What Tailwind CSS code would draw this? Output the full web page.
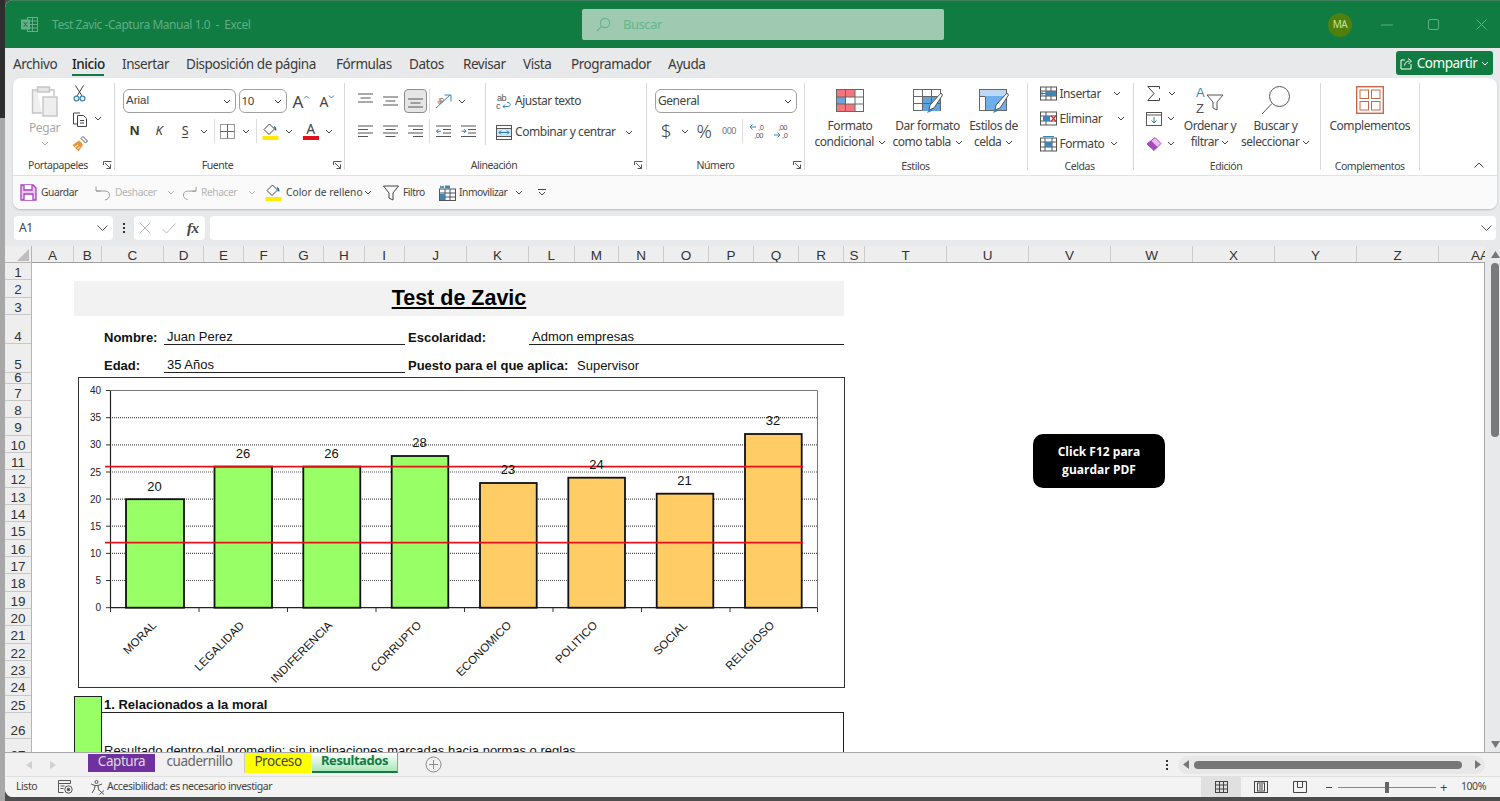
<!DOCTYPE html>
<html lang="es">
<head>
<meta charset="utf-8">
<title>Test Zavic</title>
<script src="https://cdn.jsdelivr.net/npm/@tailwindcss/browser@4"></script>
</head>
<body class="relative flex w-[1500px] h-[801px] overflow-hidden bg-[#4d4d4d] font-['Noto_Sans',sans-serif] tracking-[-0.028em] text-[#333]">
<div class="flex flex-col w-[5px] h-[801px] flex-none"><div class="h-[118px] bg-[#2e2e2e]"></div><div class="flex-1 bg-[#a8a8a8]"></div></div>
<div class="flex flex-col w-[1495px] h-[797px] rounded-tl-lg rounded-bl-lg overflow-hidden bg-[#e7e9eb]">

<!-- title bar -->
<header class="flex items-center h-[48px] flex-none bg-[#107c41] border-t border-[#3f7f5f] text-[#5fae85]">
  <svg class="ml-[16px] w-[17px] h-[17px]" viewBox="0 0 17 17" fill="none" stroke="#66ad89"><rect x="6.5" y="1.5" width="10" height="14"/><path d="M6.5 5h10M6.5 8.5h10M6.5 12h10M11.5 1.5v14"/><rect x="0.5" y="4" width="8" height="9" fill="#66ad89"/><path d="M2.5 6l4 5M6.5 6l-4 5" stroke="#107c41"/></svg>
  <span class="ml-[14px] w-[268px] text-[12px] whitespace-pre">Test Zavic -Captura Manual 1.0  -  Excel</span>
  <div class="flex items-center ml-[262px] w-[362px] h-[31px] rounded-[2px] bg-[#9fcab1]">
    <svg class="ml-[14px] w-[15px] h-[15px]" viewBox="0 0 15 15" fill="none" stroke="#62b88a" stroke-width="1.2"><circle cx="9" cy="6" r="4.6"/><path d="M5.6 9.4L1 14"/></svg>
    <span class="ml-[12px] text-[13px] text-[#62b88a]">Buscar</span>
  </div>
  <div class="flex items-center justify-center ml-[384px] w-[24px] h-[24px] rounded-full bg-[#4f800f] text-[10px] text-[#c5e29c]">MA</div>
  <svg class="ml-[29px] w-[12px] h-[2px]" viewBox="0 0 12 2"><path d="M0 1h12" stroke="#5fae85"/></svg>
  <svg class="ml-[35px] w-[11px] h-[11px]" viewBox="0 0 11 11" fill="none"><rect x="0.5" y="0.5" width="10" height="10" rx="1.5" stroke="#5fae85"/></svg>
  <svg class="ml-[37px] w-[11px] h-[11px]" viewBox="0 0 11 11" fill="none"><path d="M0.5 0.5l10 10M10.5 0.5l-10 10" stroke="#5fae85"/></svg>
</header>

<!-- ribbon tabs -->
<nav class="flex items-center h-[30px] flex-none pl-[8px] pt-[2px] text-[13.5px] text-[#3a3a3a]">
  <span class="w-[59px]">Archivo</span>
  <span class="relative w-[50px] font-medium text-[#222]">Inicio<i class="absolute left-0 top-[20px] w-[32px] h-[2px] bg-[#107c41]"></i></span>
  <span class="w-[64px]">Insertar</span>
  <span class="w-[150px]">Disposición de página</span>
  <span class="w-[73px]">Fórmulas</span>
  <span class="w-[54px]">Datos</span>
  <span class="w-[60px]">Revisar</span>
  <span class="w-[48px]">Vista</span>
  <span class="w-[97px]">Programador</span>
  <span>Ayuda</span>
  <div class="flex items-center justify-center ml-auto mr-[7px] mb-[2px] w-[97px] h-[24px] rounded-[3px] bg-[#107c41] text-white text-[13.5px] gap-[4px]">
    <svg class="w-[13px] h-[13px]" viewBox="0 0 13 13" fill="none" stroke="#fff"><path d="M5 3H1v9h10V7M4.5 8.5C5 5.5 7 4 9.5 4M8 1.500l3.500 2.500L8.500 7"/></svg>
    <span>Compartir</span>
    <svg class="w-[8px] h-[5px]" viewBox="0 0 8 5" fill="none" stroke="#fff"><path d="M1 1l3 3 3-3"/></svg>
  </div>
</nav>

<!-- ribbon card -->
<section class="ml-[8px] mr-[-2px] w-[1484px] h-[131px] flex-none flex flex-col rounded-lg bg-white shadow-[0_1px_2px_#bbb] text-[12px] text-[#444]">
  <div class="flex h-[97px] flex-none">

    <!-- Portapapeles -->
    <div class="flex flex-col w-[101.5px] h-[87px] mt-[5px] border-r border-[#d9d9d9] flex-none [&>*]:flex-none">
      <div class="flex h-[75px]">
        <div class="flex flex-col items-center ml-[4px] w-[55px]">
          <svg class="w-[28px] h-[31px] mt-[3px]" viewBox="0 0 28 31" fill="none" stroke="#c4c4c4" stroke-width="1.4"><path d="M6 4H1.500v23H11" fill="#eee"/><path d="M19 4h4v6" /><rect x="6.500" y="1" width="12" height="5" fill="#e4e4e4"/><rect x="12" y="11" width="14" height="19" fill="#eee"/></svg>
          <span class="mt-[2px] text-[#aaa]">Pegar</span>
          <svg class="w-[8px] h-[5px] mt-[4px]" viewBox="0 0 8 5" fill="none" stroke="#aaa"><path d="M1 1l3 3 3-3"/></svg>
        </div>
        <div class="flex flex-col -mt-[2px]">
          <div class="flex items-center h-[25px] pl-[1px]"><svg class="w-[13px] h-[17px]" viewBox="0 0 13 17" fill="none"><path d="M2.500 0.500L9 11M10.500 0.500L4 11" stroke="#444"/><circle cx="3.500" cy="13.500" r="2.400" stroke="#3f86b6" stroke-width="1.300"/><circle cx="9.500" cy="13.500" r="2.400" stroke="#3f86b6" stroke-width="1.300"/></svg></div>
          <div class="flex items-center h-[25px]"><svg class="w-[16px] h-[17px]" viewBox="0 0 16 17" fill="none" stroke="#444"><path d="M8 3H1.500v11H5"/><path d="M5.500 5.500h6l3 3v8h-9z" fill="#fff"/><path d="M8 10.500h4M8 13h4"/></svg><svg class="ml-[6px] w-[8px] h-[5px]" viewBox="0 0 8 5" fill="none" stroke="#444"><path d="M1 1l3 3 3-3"/></svg></div>
          <div class="flex items-center h-[25px]"><svg class="w-[16px] h-[16px]" viewBox="0 0 16 16" fill="none"><path d="M9 2.500l4.500 4.500 2-2-4.500-4.500z" stroke="#555"/><path d="M9.500 6.500L7 4.500 0.500 9l6 6.500L11 9z" fill="#e9973a"/><path d="M3 11l3-2M5.500 13l2.500-2.500" stroke="#fff"/></svg></div>
        </div>
      </div>
      <div class="relative h-[15px] leading-[15px] text-[10.5px] pl-[15px]">Portapapeles<svg class="absolute left-[90px] top-[3px] w-[9px] h-[9px]" viewBox="0 0 9 9" fill="none" stroke="#555"><path d="M0.500 4V0.500H8.500M2 2l5.500 5.500M7.500 3.500v4h-4"/></svg></div>
    </div>

    <!-- Fuente -->
    <div class="flex flex-col w-[230px] h-[87px] mt-[5px] border-r border-[#d9d9d9] flex-none [&>*]:flex-none">
      <div class="h-[75px] pt-[6px]">
        <div class="flex items-center h-[24px] pl-[8.500px]">
          <div class="flex items-center justify-between w-[113px] h-[24px] px-[2px] pr-[4px] rounded-md border border-[#a0a0a0] font-['Liberation_Sans',sans-serif] tracking-normal text-[11.5px]">Arial<svg class="w-[8px] h-[5px]" viewBox="0 0 8 5" fill="none" stroke="#333"><path d="M1 1l3 3 3-3"/></svg></div>
          <div class="flex items-center justify-between ml-[2.500px] w-[48px] h-[24px] px-[2px] pr-[4px] rounded-md border border-[#a0a0a0] text-[11.5px]">10<svg class="w-[8px] h-[5px]" viewBox="0 0 8 5" fill="none" stroke="#333"><path d="M1 1l3 3 3-3"/></svg></div>
          <span class="flex ml-[6px] w-[27px] text-[17px] text-[#444] leading-none">A<svg class="w-[7px] h-[4px] mt-[2px]" viewBox="0 0 7 4" fill="none" stroke="#3f86b6"><path d="M1 3.500l2.500-2.500 2.500 2.500"/></svg></span>
          <span class="flex text-[14px] text-[#444] leading-none pt-[2px]">A<svg class="w-[7px] h-[4px]" viewBox="0 0 7 4" fill="none" stroke="#3f86b6"><path d="M1 0.500l2.500 2.500 2.500-2.500"/></svg></span>
        </div>
        <div class="flex items-center h-[24px] mt-[6px] pl-[9.500px]">
          <span class="w-[21px] text-center font-['Liberation_Sans',sans-serif] font-bold text-[13.5px] text-[#333]">N</span>
          <span class="w-[28px] text-center italic text-[13px]">K</span>
          <span class="w-[24px] text-center underline underline-offset-2 text-[12.5px]">S</span>
          <span class="flex justify-center w-[14px]"><svg class="w-[8px] h-[5px]" viewBox="0 0 8 5" fill="none" stroke="#444"><path d="M1 1l3 3 3-3"/></svg></span>
          <i class="ml-[2.500px] w-px h-[24px] bg-[#ddd]"></i>
          <span class="flex justify-center w-[26px]"><svg class="w-[15px] h-[15px]" viewBox="0 0 15 15" fill="none" stroke="#9a9a9a"><rect x="0.500" y="0.500" width="14" height="14"/><path d="M7.500 0.500v14M0.500 7.500h14" stroke="#666"/></svg></span>
          <span class="flex justify-center w-[11px]"><svg class="w-[8px] h-[5px]" viewBox="0 0 8 5" fill="none" stroke="#444"><path d="M1 1l3 3 3-3"/></svg></span>
          <i class="ml-[4px] w-px h-[24px] bg-[#ddd]"></i>
          <span class="flex justify-center w-[28px]"><svg class="w-[17px] h-[17px]" viewBox="0 0 17 17" fill="none"><path d="M7.500 1L2 6.500l5 5 5.500-5.500z" stroke="#444" fill="#fff"/><path d="M12 3.500c1.500 1 2 2 1.500 4" stroke="#1b6fa8" stroke-width="1.500"/><rect x="0.500" y="13" width="16" height="4" fill="#ffea00"/></svg></span>
          <span class="flex justify-center w-[9px]"><svg class="w-[8px] h-[5px]" viewBox="0 0 8 5" fill="none" stroke="#444"><path d="M1 1l3 3 3-3"/></svg></span>
          <span class="ml-[3px] flex flex-col items-center w-[28px] leading-none"><span class="text-[14px] text-[#444] h-[14px]">A</span><i class="w-[16px] h-[4px] bg-[#e0101a]"></i></span>
          <span class="flex justify-center w-[9px]"><svg class="w-[8px] h-[5px]" viewBox="0 0 8 5" fill="none" stroke="#444"><path d="M1 1l3 3 3-3"/></svg></span>
        </div>
      </div>
      <div class="relative h-[15px] leading-[15px] text-[10.5px] text-center pr-[23px]">Fuente<svg class="absolute left-[218px] top-[3px] w-[9px] h-[9px]" viewBox="0 0 9 9" fill="none" stroke="#555"><path d="M0.500 4V0.500H8.500M2 2l5.500 5.500M7.500 3.500v4h-4"/></svg></div>
    </div>

    <!-- Alineacion -->
    <div class="flex flex-col w-[302px] h-[87px] mt-[5px] border-r border-[#d9d9d9] flex-none [&>*]:flex-none">
      <div class="flex h-[75px]">
        <div class="w-[141.500px] h-[62px] border-r border-[#d9d9d9] pt-[6px] flex-none">
          <div class="flex items-center h-[24px] pl-[7.500px]">
            <span class="flex justify-center w-[26px]"><svg class="w-[15px] h-[11px] -mt-[6px]" viewBox="0 0 15 11" fill="none" stroke="#555"><path d="M0 1h15M2.500 5h10M0 9h15"/></svg></span>
            <span class="flex justify-center w-[24px]"><svg class="w-[15px] h-[11px]" viewBox="0 0 15 11" fill="none" stroke="#555"><path d="M0 1h15M2.500 5h10M0 9h15"/></svg></span>
            <span class="flex items-center justify-center ml-[1.500px] w-[23.500px] h-[24px] rounded-[4px] border border-[#8d8d8d] bg-[#e6e6e6]"><svg class="w-[15px] h-[11px] mt-[4px]" viewBox="0 0 15 11" fill="none" stroke="#555"><path d="M0 1h15M2.500 5h10M0 9h15"/></svg></span>
            <i class="ml-[1.500px] w-px h-[24px] bg-[#ddd]"></i>
            <span class="flex justify-center w-[28px]"><svg class="w-[17px] h-[16px]" viewBox="0 0 17 16" fill="none"><path d="M1 15L15 2M9.500 2H16v6.500" stroke="#3f86b6"/><text x="1" y="10" transform="rotate(-45 5 7)" font-size="7" fill="#555" stroke="none" font-family="Liberation Sans">ab</text></svg></span>
            <svg class="w-[8px] h-[5px]" viewBox="0 0 8 5" fill="none" stroke="#444"><path d="M1 1l3 3 3-3"/></svg>
          </div>
          <div class="flex items-center h-[24px] mt-[6px] pl-[7.500px]">
            <span class="flex justify-center w-[26px]"><svg class="w-[15px] h-[13px]" viewBox="0 0 15 13" fill="none" stroke="#555"><path d="M0 1h15M0 4.500h10M0 8h15M0 11.500h10"/></svg></span>
            <span class="flex justify-center w-[25px]"><svg class="w-[15px] h-[13px]" viewBox="0 0 15 13" fill="none" stroke="#555"><path d="M0 1h15M2.500 4.500h10M0 8h15M2.500 11.500h10"/></svg></span>
            <span class="flex justify-center w-[24px]"><svg class="w-[15px] h-[13px]" viewBox="0 0 15 13" fill="none" stroke="#555"><path d="M0 1h15M5 4.500h10M0 8h15M5 11.500h10"/></svg></span>
            <i class="ml-[1.500px] w-px h-[24px] bg-[#ddd]"></i>
            <span class="flex justify-center w-[27px]"><svg class="w-[15px] h-[13px]" viewBox="0 0 15 13" fill="none" stroke="#555"><path d="M0 1h15M7 4.500h8M7 8h8M0 11.500h15"/><path d="M5 6.200H0.500M2.500 4.200l-2 2 2 2" stroke="#2a7ab0"/></svg></span>
            <span class="flex justify-center w-[24px]"><svg class="w-[15px] h-[13px]" viewBox="0 0 15 13" fill="none" stroke="#555"><path d="M0 1h15M7 4.500h8M7 8h8M0 11.500h15"/><path d="M0.500 6.200H5M3 4.200l2 2-2 2" stroke="#2a7ab0"/></svg></span>
          </div>
        </div>
        <div class="flex-1 pt-[6px]">
          <div class="flex items-center h-[24px] pl-[10px]"><svg class="w-[16px] h-[17px]" viewBox="0 0 16 17" fill="none"><text x="1" y="8" font-size="9" fill="#555" stroke="none" font-family="Liberation Sans">ab</text><text x="0" y="16" font-size="9" fill="#555" stroke="none" font-family="Liberation Sans">c</text><path d="M7 13.500h5c3 0 3-4 0-4h-1M9 11.500l-2 2 2 2" stroke="#3f86b6"/></svg><span class="ml-[3px]">Ajustar texto</span></div>
          <div class="flex items-center h-[24px] mt-[7px] pl-[9.500px]"><svg class="w-[16px] h-[15px]" viewBox="0 0 16 15" fill="none" stroke="#555"><rect x="0.500" y="0.500" width="15" height="14"/><path d="M0.500 3.500h15M0.500 11.500h15"/><rect x="1" y="4" width="14" height="7" fill="#cfe6f5" stroke="none"/><path d="M3 7.500h10M5 5.500l-2 2 2 2M11 5.500l2 2-2 2" stroke="#2a7ab0"/></svg><span class="ml-[3.500px] w-[110px] whitespace-nowrap">Combinar y centrar</span><svg class="w-[8px] h-[5px]" viewBox="0 0 8 5" fill="none" stroke="#444"><path d="M1 1l3 3 3-3"/></svg></div>
        </div>
      </div>
      <div class="relative h-[15px] leading-[15px] text-[10.5px] text-center pr-[2px]">Alineación<svg class="absolute left-[289px] top-[3px] w-[9px] h-[9px]" viewBox="0 0 9 9" fill="none" stroke="#555"><path d="M0.500 4V0.500H8.500M2 2l5.500 5.500M7.500 3.500v4h-4"/></svg></div>
    </div>

    <!-- Numero -->
    <div class="flex flex-col w-[158px] h-[87px] mt-[5px] border-r border-[#d9d9d9] flex-none [&>*]:flex-none">
      <div class="h-[75px] pt-[6px]">
        <div class="flex items-center justify-between ml-[8.500px] w-[142px] h-[24px] px-[2px] pr-[4px] rounded-md border border-[#a0a0a0]">General<svg class="w-[8px] h-[5px]" viewBox="0 0 8 5" fill="none" stroke="#333"><path d="M1 1l3 3 3-3"/></svg></div>
        <div class="flex items-center h-[24px] mt-[6px] pl-[11.500px]">
          <span class="w-[16px] text-center text-[19px] font-light leading-none text-[#444]">$</span>
          <span class="flex justify-center w-[22px]"><svg class="w-[8px] h-[5px]" viewBox="0 0 8 5" fill="none" stroke="#444"><path d="M1 1l3 3 3-3"/></svg></span>
          <span class="w-[16px] text-center text-[19px] font-light leading-none text-[#444]">%</span>
          <span class="ml-[9px] w-[16px] text-center text-[9px] text-[#777]">000</span>
          <i class="ml-[5px] w-px h-[24px] bg-[#ddd]"></i>
          <span class="ml-[6px] w-[17px] h-[16px]"><svg class="w-[17px] h-[16px]" viewBox="0 0 17 16" fill="none"><path d="M7 4H1M3.500 1.500L1 4l2.500 2.500" stroke="#3f86b6"/><text x="9" y="7" font-size="7.500" fill="#555" stroke="none" font-family="Liberation Sans">,0</text><text x="5" y="15" font-size="7.500" fill="#555" stroke="none" font-family="Liberation Sans">,00</text></svg></span>
          <span class="ml-[7px] w-[17px] h-[16px]"><svg class="w-[17px] h-[16px]" viewBox="0 0 17 16" fill="none"><text x="5" y="7" font-size="7.500" fill="#555" stroke="none" font-family="Liberation Sans">,00</text><text x="9" y="15" font-size="7.500" fill="#555" stroke="none" font-family="Liberation Sans">,0</text><path d="M1 12h6M4.500 9.500L7 12l-2.500 2.500" stroke="#3f86b6"/></svg></span>
        </div>
      </div>
      <div class="relative h-[15px] leading-[15px] text-[10.5px] text-center pr-[19px]">Número<svg class="absolute left-[146px] top-[3px] w-[9px] h-[9px]" viewBox="0 0 9 9" fill="none" stroke="#555"><path d="M0.500 4V0.500H8.500M2 2l5.500 5.500M7.500 3.500v4h-4"/></svg></div>
    </div>

    <!-- Estilos -->
    <div class="flex flex-col w-[223px] h-[87px] mt-[5px] border-r border-[#d9d9d9] flex-none [&>*]:flex-none">
      <div class="flex h-[75px] leading-[15.500px] text-center">
        <div class="flex flex-col items-center w-[91px] flex-none">
          <svg class="w-[28px] h-[23px] mt-[6px] mb-[6px]" viewBox="0 0 28 23" fill="none" stroke="#666"><rect x="0.500" y="0.500" width="27" height="22" fill="#fff"/><rect x="1" y="1" width="18" height="7" fill="#f4757d" stroke="none"/><rect x="1" y="15" width="18" height="7" fill="#f4757d" stroke="none"/><rect x="1" y="8" width="9" height="7" fill="#6ba5d9" stroke="none"/><path d="M0.500 8h27M0.500 15h27M9.500 0.500v22M19 0.500v22"/></svg>
          <span>Formato</span>
          <span class="whitespace-nowrap">condicional <svg class="inline w-[8px] h-[5px] ml-[1px]" viewBox="0 0 8 5" fill="none" stroke="#444"><path d="M1 1l3 3 3-3"/></svg></span>
        </div>
        <div class="flex flex-col items-center w-[66px] -ml-[1px] flex-none">
          <svg class="w-[30px] h-[26px] mt-[6px] mb-[3px]" viewBox="0 0 30 26" fill="none"><rect x="0.500" y="0.500" width="27" height="21" stroke="#666" fill="#fff"/><rect x="9" y="8" width="18" height="14" fill="#5ea3e0"/><path d="M0.500 7.500h27M0.500 14.500h27M9.500 0.500v21M18.500 0.500v21" stroke="#666"/><path d="M28 4L17 16l-1 5 5-2L29.500 6z" fill="#fff" stroke="#555"/><path d="M16 20l-2 4 5-2z" fill="#3f86b6"/></svg>
          <span class="whitespace-nowrap">Dar formato</span>
          <span class="whitespace-nowrap">como tabla <svg class="inline w-[8px] h-[5px] ml-[1px]" viewBox="0 0 8 5" fill="none" stroke="#444"><path d="M1 1l3 3 3-3"/></svg></span>
        </div>
        <div class="flex flex-col items-center w-[66px] flex-none">
          <svg class="w-[30px] h-[26px] mt-[6px] mb-[3px]" viewBox="0 0 30 26" fill="none"><rect x="0.500" y="0.500" width="27" height="21" stroke="#666" fill="#fff"/><rect x="1" y="1" width="26" height="6" fill="#bcd8f2"/><rect x="7" y="7" width="20" height="14" fill="#6bb0ea"/><path d="M0.500 7.500h6M6.500 7.500v14" stroke="#666"/><path d="M28 4L17 16l-1 5 5-2L29.500 6z" fill="#fff" stroke="#555"/><path d="M16 20l-2 4 5-2z" fill="#3f86b6"/></svg>
          <span class="whitespace-nowrap">Estilos de</span>
          <span class="whitespace-nowrap">celda <svg class="inline w-[8px] h-[5px] ml-[1px]" viewBox="0 0 8 5" fill="none" stroke="#444"><path d="M1 1l3 3 3-3"/></svg></span>
        </div>
      </div>
      <div class="h-[15px] leading-[15px] text-[10.5px] text-center translate-y-[1px]">Estilos</div>
    </div>

    <!-- Celdas -->
    <div class="flex flex-col w-[106px] h-[87px] mt-[5px] border-r border-[#d9d9d9] flex-none [&>*]:flex-none">
      <div class="h-[77px] pl-[12px] -mt-[2px]">
        <div class="flex items-center h-[25px]"><svg class="w-[17px] h-[15px]" viewBox="0 0 17 15" fill="none" stroke="#555"><rect x="0.500" y="1" width="16" height="13"/><path d="M6 1v13M11 1v13M0.500 5h16M0.500 10h16"/><rect x="6" y="5" width="10" height="5" fill="#3f86b6" stroke="none"/><path d="M1 7.500h5M3 5.500l-2 2 2 2" stroke="#2a7ab0"/></svg><span class="ml-[3px] w-[53px]">Insertar</span><svg class="w-[8px] h-[5px]" viewBox="0 0 8 5" fill="none" stroke="#444"><path d="M1 1l3 3 3-3"/></svg></div>
        <div class="flex items-center h-[25px]"><svg class="w-[17px] h-[15px]" viewBox="0 0 17 15" fill="none" stroke="#555"><rect x="0.500" y="1" width="16" height="13"/><path d="M6 1v13M0.500 5h16M0.500 10h16"/><rect x="3" y="5" width="7" height="5" fill="#3f86b6" stroke="none"/><path d="M11 4.500l5 6M16 4.500l-5 6" stroke="#d9343c" stroke-width="1.300"/></svg><span class="ml-[3px] w-[57px]">Eliminar</span><svg class="w-[8px] h-[5px]" viewBox="0 0 8 5" fill="none" stroke="#444"><path d="M1 1l3 3 3-3"/></svg></div>
        <div class="flex items-center h-[25px]"><svg class="w-[17px] h-[16px]" viewBox="0 0 17 16" fill="none" stroke="#555"><rect x="0.500" y="2" width="16" height="13"/><path d="M5 2v13M12 2v13M0.500 6h16M0.500 11h16"/><rect x="5" y="6" width="7" height="5" fill="#3f86b6" stroke="none"/><path d="M3 0.500h11" stroke="#3f86b6"/></svg><span class="ml-[3px] w-[50px]">Formato</span><svg class="w-[8px] h-[5px]" viewBox="0 0 8 5" fill="none" stroke="#444"><path d="M1 1l3 3 3-3"/></svg></div>
      </div>
      <div class="h-[15px] leading-[15px] text-[10.5px] text-center translate-y-[1px] pr-[1px]">Celdas</div>
    </div>

    <!-- Edicion -->
    <div class="flex flex-col w-[187px] h-[87px] mt-[5px] border-r border-[#d9d9d9] flex-none [&>*]:flex-none">
      <div class="flex h-[75px]">
        <div class="flex flex-col w-[44px] pl-[12px] -mt-[2px] flex-none">
          <div class="flex items-center h-[25px]"><span class="flex justify-center w-[16px]"><svg class="w-[13px] h-[15px]" viewBox="0 0 13 15" fill="none" stroke="#444"><path d="M12.500 3V0.500H0.800L7 7.500 0.800 14.500h11.700V12"/></svg></span><svg class="ml-[6px] w-[8px] h-[5px]" viewBox="0 0 8 5" fill="none" stroke="#444"><path d="M1 1l3 3 3-3"/></svg></div>
          <div class="flex items-center h-[25px]"><svg class="w-[16px] h-[14px]" viewBox="0 0 16 14" fill="none" stroke="#555"><rect x="0.500" y="0.500" width="15" height="13"/><path d="M0.500 3h15"/><path d="M8 5v6M5.500 8.500L8 11l2.500-2.500" stroke="#2a7ab0"/></svg><svg class="ml-[5px] w-[8px] h-[5px]" viewBox="0 0 8 5" fill="none" stroke="#444"><path d="M1 1l3 3 3-3"/></svg></div>
          <div class="flex items-center h-[25px]"><svg class="w-[16px] h-[14px]" viewBox="0 0 16 14" fill="none"><path d="M9 0.500l6 6L8 13.500 1 7z" fill="#e6bdec" stroke="#a64bbd"/><path d="M5 3.500l6.500 6.500L8 13.500 1 7z" fill="#a64bbd"/></svg><svg class="ml-[5px] w-[8px] h-[5px]" viewBox="0 0 8 5" fill="none" stroke="#444"><path d="M1 1l3 3 3-3"/></svg></div>
        </div>
        <div class="flex flex-col items-center w-[65px] leading-[15.500px] text-center flex-none">
          <svg class="w-[30px] h-[29px] mt-[3px] mb-[3px]" viewBox="0 0 30 29" fill="none"><text x="1" y="11" font-size="13" fill="#3f86b6" stroke="none" font-family="Liberation Sans">A</text><text x="1" y="27" font-size="13" fill="#555" stroke="none" font-family="Liberation Sans">Z</text><path d="M12 9h16l-6 7v8l-4-2v-6z" stroke="#555" fill="#fff"/></svg>
          <span class="whitespace-nowrap">Ordenar y</span>
          <span class="whitespace-nowrap">filtrar <svg class="inline w-[8px] h-[5px]" viewBox="0 0 8 5" fill="none" stroke="#444"><path d="M1 1l3 3 3-3"/></svg></span>
        </div>
        <div class="flex flex-col items-center w-[66px] leading-[15.500px] text-center flex-none">
          <svg class="w-[30px] h-[29px] mt-[3px] mb-[3px]" viewBox="0 0 30 29" fill="none" stroke="#555"><circle cx="18.500" cy="10.500" r="10"/><path d="M11 17.500L1 28"/></svg>
          <span class="whitespace-nowrap">Buscar y</span>
          <span class="whitespace-nowrap">seleccionar <svg class="inline w-[8px] h-[5px]" viewBox="0 0 8 5" fill="none" stroke="#444"><path d="M1 1l3 3 3-3"/></svg></span>
        </div>
      </div>
      <div class="h-[15px] leading-[15px] text-[10.5px] text-center translate-y-[1px] pr-[1px]">Edición</div>
    </div>

    <!-- Complementos -->
    <div class="flex flex-col w-[99.500px] h-[87px] mt-[5px] border-r border-[#d9d9d9] flex-none [&>*]:flex-none">
      <div class="flex flex-col items-center h-[75px] leading-[15.500px]">
        <svg class="w-[28px] h-[28px] mt-[3px] mb-[4px]" viewBox="0 0 28 28" fill="none"><rect x="0.700" y="0.700" width="26.600" height="26.600" stroke="#c5694a" stroke-width="1.400"/><rect x="4" y="4" width="8.500" height="8.500" stroke="#c5694a"/><rect x="15.500" y="4" width="8.500" height="8.500" stroke="#c5694a"/><rect x="4" y="15.500" width="8.500" height="8.500" stroke="#c5694a"/><rect x="15.500" y="15.500" width="8.500" height="8.500" stroke="#c5694a"/></svg>
        <span>Complementos</span>
      </div>
      <div class="h-[15px] leading-[15px] text-[10.5px] text-center translate-y-[1px]">Complementos</div>
    </div>

    <div class="flex justify-end items-end flex-1 pr-[13px] pb-[7px]"><svg class="w-[10px] h-[6px]" viewBox="0 0 10 6" fill="none" stroke="#444"><path d="M0.500 5.500L5 1l4.500 4.500"/></svg></div>
  </div>

  <!-- quick access -->
  <div class="flex items-center h-[34px] flex-none rounded-b-lg bg-[#fafafa] border-t border-[#e2e2e2] text-[10.25px] text-[#444] whitespace-nowrap">
    <svg class="ml-[7px] w-[17px] h-[17px]" viewBox="0 0 17 17" fill="none" stroke="#a83fc0" stroke-width="1.300"><path d="M1 1h12l3 3v12H1z" fill="#e7c9ee"/><path d="M4 1v5h8V1M4 16v-6h9v6" fill="#fff"/></svg>
    <span class="ml-[4px] w-[54px]">Guardar</span>
    <svg class="w-[16px] h-[16px]" viewBox="0 0 16 16" fill="none" stroke="#9a9a9a"><path d="M1 6h9c6 0 6 8 0 9M1 1.500V6h4.500"/></svg>
    <span class="ml-[4px] w-[49px] text-[#b5b5b5]">Deshacer</span>
    <svg class="ml-[3px] w-[8px] h-[5px]" viewBox="0 0 8 5" fill="none" stroke="#bbb"><path d="M1 1l3 3 3-3"/></svg>
    <svg class="ml-[7px] w-[15px] h-[16px]" viewBox="0 0 16 16" fill="none" stroke="#9a9a9a"><path d="M15 6H6c-6 0-6 8 0 9M15 1.500V6h-4.500"/></svg>
    <span class="ml-[4px] w-[43px] text-[#b5b5b5]">Rehacer</span>
    <svg class="ml-[4px] w-[8px] h-[5px]" viewBox="0 0 8 5" fill="none" stroke="#bbb"><path d="M1 1l3 3 3-3"/></svg>
    <svg class="ml-[9px] w-[17px] h-[17px]" viewBox="0 0 17 17" fill="none"><path d="M7.500 1L2 6.500l5 5 5.500-5.500z" stroke="#444" fill="#fff"/><path d="M12 3.500c1.500 1 2 2 1.500 4" stroke="#1b6fa8" stroke-width="1.500"/><rect x="0.500" y="13" width="16" height="4" fill="#ffea00"/></svg>
    <span class="ml-[4px] w-[78px] tracking-normal">Color de relleno</span>
    <svg class="w-[8px] h-[5px]" viewBox="0 0 8 5" fill="none" stroke="#444"><path d="M1 1l3 3 3-3"/></svg>
    <svg class="ml-[11px] w-[16px] h-[16px]" viewBox="0 0 16 16" fill="none" stroke="#444"><path d="M0.500 1h15L10 8v7l-4-2V8z"/></svg>
    <span class="ml-[4px] w-[36px]">Filtro</span>
    <svg class="w-[17px] h-[16px]" viewBox="0 0 17 16" fill="none" stroke="#555"><rect x="0.500" y="4" width="16" height="11.500"/><path d="M6 4v11.500M11 4v11.500M0.500 8h16M0.500 12h16"/><rect x="1" y="9" width="5" height="6" fill="#3f86b6" stroke="none"/><rect x="6" y="0.500" width="5" height="3" fill="#3f86b6" stroke="none"/><path d="M1 1l4 2M5 1L1 3" stroke="#2a7ab0"/></svg>
    <span class="ml-[3px] w-[56px]">Inmovilizar</span>
    <svg class="w-[8px] h-[5px]" viewBox="0 0 8 5" fill="none" stroke="#444"><path d="M1 1l3 3 3-3"/></svg>
    <svg class="ml-[15px] w-[8px] h-[7px]" viewBox="0 0 8 7" fill="none" stroke="#444"><path d="M0 0.500h8M1 3l3 3 3-3"/></svg>
  </div>
</section>

<!-- formula bar -->
<div class="flex items-center h-[24px] mt-[7px] ml-[9px] flex-none text-[#444]">
  <div class="flex items-center justify-between w-[99px] h-[24px] pl-[5px] pr-[5px] rounded bg-white text-[12px]">A1<svg class="w-[11px] h-[6px]" viewBox="0 0 11 6" fill="none" stroke="#555"><path d="M0.500 0.500L5.500 5.500 10.500 0.500"/></svg></div>
  <span class="flex flex-col items-center justify-center gap-[2px] w-[21px]"><i class="w-[2px] h-[2px] bg-[#333]"></i><i class="w-[2px] h-[2px] bg-[#333]"></i><i class="w-[2px] h-[2px] bg-[#333]"></i></span>
  <div class="flex items-center w-[71px] h-[24px] rounded bg-white pl-[5px]">
    <svg class="w-[12px] h-[12px]" viewBox="0 0 12 12" fill="none" stroke="#b8b8b8"><path d="M0.500 0.500l11 11M11.500 0.500l-11 11"/></svg>
    <svg class="ml-[11px] w-[14px] h-[11px]" viewBox="0 0 14 11" fill="none" stroke="#b8b8b8"><path d="M0.500 6l4 4 9-9.500"/></svg>
    <span class="ml-[11px] font-['Liberation_Serif',serif] italic font-bold text-[15px] leading-none text-[#444]">fx</span>
  </div>
  <div class="flex items-center justify-end ml-[5px] w-[1286px] h-[24px] rounded bg-white pr-[4px]"><svg class="w-[11px] h-[6px]" viewBox="0 0 11 6" fill="none" stroke="#555"><path d="M0.500 0.500L5.500 5.500 10.500 0.500"/></svg></div>
</div>

<!-- column headers -->
<div class="flex h-[17px] mt-[6px] flex-none bg-[#eeeeee] font-['Liberation_Sans',sans-serif] tracking-normal text-[13.5px] text-[#333]">
  <div class="flex justify-end items-end w-[27px] flex-none border-r border-b border-[#b5b5b5] pr-[2px] pb-[1px]"><svg class="w-[12px] h-[12px]" viewBox="0 0 12 12"><path d="M12 0v12H0z" fill="#bdbdbd"/></svg></div>
  <div class="grid flex-none w-[1453px] overflow-hidden border-b border-[#9e9e9e] leading-[19px] text-center grid-cols-[42px_27.500px_62.500px_40px_40px_40px_40px_40.500px_40.500px_62px_62px_45.500px_44.500px_45px_45px_45px_45px_45px_21px_82px_82px_82px_82px_82px_82px_82px_46px]">
    <span class="border-r border-[#ccc]">A</span><span class="border-r border-[#ccc]">B</span><span class="border-r border-[#ccc]">C</span><span class="border-r border-[#ccc]">D</span><span class="border-r border-[#ccc]">E</span><span class="border-r border-[#ccc]">F</span><span class="border-r border-[#ccc]">G</span><span class="border-r border-[#ccc]">H</span><span class="border-r border-[#ccc]">I</span><span class="border-r border-[#ccc]">J</span><span class="border-r border-[#ccc]">K</span><span class="border-r border-[#ccc]">L</span><span class="border-r border-[#ccc]">M</span><span class="border-r border-[#ccc]">N</span><span class="border-r border-[#ccc]">O</span><span class="border-r border-[#ccc]">P</span><span class="border-r border-[#ccc]">Q</span><span class="border-r border-[#ccc]">R</span><span class="border-r border-[#ccc]">S</span><span class="border-r border-[#ccc]">T</span><span class="border-r border-[#ccc]">U</span><span class="border-r border-[#ccc]">V</span><span class="border-r border-[#ccc]">W</span><span class="border-r border-[#ccc]">X</span><span class="border-r border-[#ccc]">Y</span><span class="border-r border-[#ccc]">Z</span><span class="whitespace-nowrap overflow-hidden text-left pl-[32px]">AA</span>
  </div>
  <div class="flex justify-center items-center flex-1 bg-[#e7e9eb]"><svg class="w-[9px] h-[7px] ml-[5px]" viewBox="0 0 9 7"><path d="M4.500 0L9 7H0z" fill="#777"/></svg></div>
</div>

<!-- grid area -->
<div class="flex h-[489px] flex-none font-['Liberation_Sans',sans-serif] tracking-normal">
  <div class="flex flex-col w-[27px] flex-none overflow-hidden bg-[#eeeeee] border-r border-[#b5b5b5] text-[13.5px] text-[#333] text-center [&>span]:border-b [&>span]:border-[#c8c8c8] [&>span]:flex-none">
    <span class="h-[17.330px] leading-[19px]">1</span><span class="h-[17.330px] leading-[19px]">2</span><span class="h-[17.340px] leading-[19px]">3</span><span class="h-[29px] leading-[44px]">4</span><span class="h-[29px] leading-[42px]">5</span><span class="h-[11px] leading-[9px] overflow-hidden">6</span><span class="h-[17px] leading-[19px]">7</span>
    <span class="h-[17.350px] leading-[19px]">8</span><span class="h-[17.350px] leading-[19px]">9</span><span class="h-[17.350px] leading-[19px]">10</span><span class="h-[17.350px] leading-[19px]">11</span><span class="h-[17.350px] leading-[19px]">12</span><span class="h-[17.350px] leading-[19px]">13</span><span class="h-[17.350px] leading-[19px]">14</span><span class="h-[17.350px] leading-[19px]">15</span><span class="h-[17.350px] leading-[19px]">16</span><span class="h-[17.350px] leading-[19px]">17</span><span class="h-[17.350px] leading-[19px]">18</span><span class="h-[17.350px] leading-[19px]">19</span><span class="h-[17.350px] leading-[19px]">20</span><span class="h-[17.350px] leading-[19px]">21</span><span class="h-[17.350px] leading-[19px]">22</span><span class="h-[17.350px] leading-[19px]">23</span><span class="h-[17.350px] leading-[19px]">24</span>
    <span class="h-[17px] leading-[19px]">25</span><span class="h-[26px] leading-[36px]">26</span><span class="h-[26px] leading-[33px]">27</span>
  </div>
  <div class="relative w-[1453px] flex-none overflow-hidden bg-white border-r border-[#a8a8a8] text-[13px] text-[#111] grid grid-cols-[42px_27.500px_62.500px_40px_40px_40px_40px_40.500px_40.500px_62px_62px_45.500px_44.500px_45px_45px_45px_45px_45px_21px_82px_82px_82px_82px_82px_82px_82px_46px] grid-rows-[18px_35px_28.500px_28.500px_323px_17px_26px_13px]">
    <div class="col-start-2 col-end-19 row-start-2 flex items-center justify-center bg-[#f2f2f2] text-[21.500px] font-bold underline text-black">Test de Zavic</div>

    <div class="col-start-3 col-end-4 row-start-3 flex items-end pl-[2.500px] leading-[14px] font-bold">Nombre:</div>
    <div class="col-start-4 col-end-10 row-start-3 flex items-end pl-[3px] leading-[14px] border-b border-[#222]">Juan Perez</div>
    <div class="col-start-10 col-end-12 row-start-3 flex items-end pl-[3px] leading-[14px] font-bold">Escolaridad:</div>
    <div class="col-start-12 col-end-19 row-start-3 flex items-end pl-[3px] leading-[14px] border-b border-[#222]">Admon empresas</div>

    <div class="col-start-3 col-end-4 row-start-4 flex items-end pl-[2.500px] leading-[14px] font-bold">Edad:</div>
    <div class="col-start-4 col-end-10 row-start-4 flex items-end pl-[3px] leading-[14px] border-b border-[#222]">35 Años</div>
    <div class="col-start-10 col-end-13 row-start-4 flex items-end pl-[3px] leading-[14px] font-bold whitespace-nowrap">Puesto para el que aplica:</div>
    <div class="col-start-13 col-end-19 row-start-4 flex items-end pl-[2.500px] leading-[14px]">Supervisor</div>

    <div class="col-start-2 col-end-20 row-start-5 pl-[3.500px] pt-[3.500px]">
      <svg class="block w-[767px] h-[311px]" viewBox="78 377 767 311" font-family="Liberation Sans" role="img" aria-label="Gráfico de resultados">
        <rect x="78.500" y="377.500" width="766" height="310" fill="#fff" stroke="#333"/>
        <g stroke="#555" stroke-width="1.200" stroke-dasharray="1 1"><path d="M110 417.700H817.700M110 444.900H817.700M110 472H817.700M110 499.100H817.700M110 526.200H817.700M110 553.400H817.700M110 580.500H817.700"/></g>
        <path d="M110.500 390.500H817.500V607.700" fill="none" stroke="#777"/>
        <path d="M110.500 390.500V607.700H817.500" fill="none" stroke="#222" stroke-width="1.200"/>
        <path d="M106 390.500h4M106 417.700h4M106 444.900h4M106 472h4M106 499.100h4M106 526.200h4M106 553.400h4M106 580.500h4M106 607.700h4M110.500 608v4M199 608v4M287.500 608v4M376 608v4M464.500 608v4M553 608v4M641.500 608v4M730 608v4M817.500 608v4" stroke="#333"/>
        <g font-size="10" text-anchor="end" fill="#222"><text x="101" y="394">40</text><text x="101" y="421">35</text><text x="101" y="448">30</text><text x="101" y="475.500">25</text><text x="101" y="502.500">20</text><text x="101" y="530">15</text><text x="101" y="557">10</text><text x="101" y="584">5</text><text x="101" y="611">0</text></g>
        <g stroke="#111" stroke-width="1.800" fill="#99ff66"><rect x="126" y="499.200" width="58" height="108.500"/><rect x="214.500" y="466.600" width="57.500" height="141.100"/><rect x="303.300" y="466.600" width="57" height="141.100"/><rect x="391.700" y="456" width="56.600" height="151.700"/></g>
        <g stroke="#111" stroke-width="1.800" fill="#ffcc66"><rect x="480" y="483" width="56.700" height="124.700"/><rect x="568.300" y="477.700" width="56.700" height="130"/><rect x="656.700" y="493.700" width="56.600" height="114"/><rect x="745" y="434" width="56.700" height="173.700"/></g>
        <path d="M105 466.600H803M105 542.600H803" stroke="#e3131b" stroke-width="1.800"/>
        <g font-size="13" text-anchor="middle" fill="#111" transform="translate(0 -1)"><text x="154.500" y="491.500">20</text><text x="243" y="458.500">26</text><text x="331.500" y="458.500">26</text><text x="419.500" y="447.500">28</text><text x="508" y="475">23</text><text x="596.500" y="469.500">24</text><text x="684.500" y="486">21</text><text x="773" y="426">32</text></g>
        <g font-size="11.500" text-anchor="end" fill="#111"><text transform="translate(157 626) rotate(-45)">MORAL</text><text transform="translate(245 626) rotate(-45)">LEGALIDAD</text><text transform="translate(333 626) rotate(-45)">INDIFERENCIA</text><text transform="translate(422 626) rotate(-45)">CORRUPTO</text><text transform="translate(512 626) rotate(-45)">ECONOMICO</text><text transform="translate(598 626) rotate(-45)">POLITICO</text><text transform="translate(688 626) rotate(-45)">SOCIAL</text><text transform="translate(775 626) rotate(-45)">RELIGIOSO</text></g>
      </svg>
    </div>

    <div class="col-start-2 col-end-3 row-start-6 row-end-9 bg-[#99ff66] border border-[#222] border-b-0"></div>
    <div class="col-start-3 col-end-19 row-start-6 flex items-center pl-[2.500px] pt-[1px] font-bold border-b border-[#222]">1. Relacionados a la moral</div>
    <div class="col-start-3 col-end-19 row-start-7 border-r border-[#222]"></div>
    <div class="col-start-3 col-end-19 row-start-8 pl-[2.500px] pt-[5px] leading-[14px] border-r border-[#222] whitespace-nowrap">Resultado dentro del promedio: sin inclinaciones marcadas hacia normas o reglas.</div>

    <div class="absolute left-[1001px] top-[171px] flex flex-col items-center justify-center w-[132px] h-[54px] rounded-[10px] bg-black text-white font-['Open_Sans',sans-serif] font-bold text-[12px] leading-[18px]"><span>Click F12 para</span><span>guardar PDF</span></div>
  </div>
  <div class="relative flex-1 bg-[#e7e9eb]">
    <div class="absolute left-[6px] top-0 w-[8px] h-[174px] rounded bg-[#7a7a7a]"></div>
    <svg class="absolute left-[6px] bottom-[4px] w-[9px] h-[7px]" viewBox="0 0 9 7"><path d="M4.500 7L9 0H0z" fill="#777"/></svg>
  </div>
</div>

<!-- sheet tabs -->
<div class="flex items-center h-[24px] flex-none bg-[#f1f1f1] border-t border-[#aaa] text-[13.5px]">
  <svg class="ml-[21px] w-[6px] h-[8px]" viewBox="0 0 6 8"><path d="M6 0v8L0 4z" fill="#d0d0d0"/></svg>
  <svg class="ml-[18px] w-[6px] h-[8px]" viewBox="0 0 6 8"><path d="M0 0v8l6-4z" fill="#d0d0d0"/></svg>
  <div class="flex self-start ml-[32px] h-[20px] items-stretch">
    <span class="flex items-center justify-center w-[67px] h-[18px] mt-[1px] pb-[3px] bg-[#7030a0] text-[#dcdcdc]">Captura</span>
    <span class="flex items-center justify-center w-[90px] pb-[3px] text-[#666] border-r border-[#c8c8c8]">cuadernillo</span>
    <span class="flex items-center justify-center w-[66px] pb-[3px] bg-[#ffff00] text-[#444]">Proceso</span>
    <span class="flex items-center justify-center w-[86px] ml-[1px] pb-[2px] font-bold text-[13px] text-[#107c41] bg-gradient-to-b from-white to-[#a8e6b8] border-b-2 border-[#107c41] border-r border-r-[#999]">Resultados</span>
  </div>
  <svg class="ml-[27px] w-[17px] h-[17px]" viewBox="0 0 17 17" fill="none" stroke="#8a8a8a"><circle cx="8.500" cy="8.500" r="7.500"/><path d="M4 8.500h9M8.500 4v9"/></svg>
  <span class="flex flex-col items-center gap-[2px] ml-[714px] w-[22px]"><i class="w-[2px] h-[2px] bg-[#333]"></i><i class="w-[2px] h-[2px] bg-[#333]"></i><i class="w-[2px] h-[2px] bg-[#333]"></i></span>
  <div class="flex items-center w-[307px] h-[18px] rounded-full bg-[#e8e8e8]">
    <svg class="ml-[5px] w-[6px] h-[9px]" viewBox="0 0 6 9"><path d="M6 0v9L0 4.500z" fill="#777"/></svg>
    <i class="ml-[5px] w-[268px] h-[8px] rounded-full bg-[#777]"></i>
    <svg class="ml-[13px] w-[6px] h-[9px]" viewBox="0 0 6 9"><path d="M0 0v9l6-4.500z" fill="#777"/></svg>
  </div>
</div>

<!-- status bar -->
<footer class="flex items-center h-[21px] flex-none bg-[#f3f3f3] text-[10.5px] text-[#444] border-t border-[#e0e0e0]">
  <span class="ml-[11px] w-[42px]">Listo</span>
  <svg class="w-[15px] h-[14px]" viewBox="0 0 15 14" fill="none" stroke="#555"><path d="M0.500 0.500h12v3h-12zM0.500 3.500v9h5M2.500 6h4M2.500 8.500h3"/><circle cx="10.500" cy="9.500" r="3.700"/><circle cx="10.500" cy="9.500" r="1.300" fill="#555"/></svg>
  <svg class="ml-[17px] w-[15px] h-[15px]" viewBox="0 0 15 15" fill="none" stroke="#555"><circle cx="6.500" cy="2" r="1.500"/><path d="M1 4l4 1.500h3L12 4M5 6l-.5 3L2 13M8 6l.5 3 1 2M9.500 10.500l4.500 4M14 10.500l-4.500 4"/></svg>
  <span class="ml-[2px]">Accesibilidad: es necesario investigar</span>
  <div class="flex items-center justify-center ml-auto w-[40px] h-[21px] bg-[#e0e0e0]"><svg class="w-[13px] h-[12px]" viewBox="0 0 13 12" fill="none" stroke="#444"><rect x="0.500" y="0.500" width="12" height="11"/><path d="M4.500 0.500v11M8.500 0.500v11M0.500 4h12M0.500 8h12"/></svg></div>
  <svg class="ml-[13px] w-[14px] h-[12px]" viewBox="0 0 14 12" fill="none" stroke="#444"><rect x="0.500" y="0.500" width="13" height="11"/><rect x="3.500" y="2" width="7" height="8"/><path d="M5 4h4M5 6h4M5 8h4"/></svg>
  <svg class="ml-[25px] w-[14px] h-[12px]" viewBox="0 0 14 12" fill="none" stroke="#444"><path d="M0.500 0.500h13v11H.5zM4.500 0.500v6h5v-6"/></svg>
  <span class="ml-[19px] w-[6px] h-px bg-[#444]"></span>
  <div class="relative ml-[6px] w-[98px] h-px bg-[#888]"><i class="absolute left-[47px] -top-[5px] w-[4px] h-[11px] bg-[#666]"></i></div>
  <span class="ml-[4px] text-[13px] leading-none text-[#444]">+</span>
  <span class="ml-[14px] mr-[15px] w-[24px] text-[10.5px] whitespace-nowrap">100%</span>
</footer>
</div>
</body>
</html>
